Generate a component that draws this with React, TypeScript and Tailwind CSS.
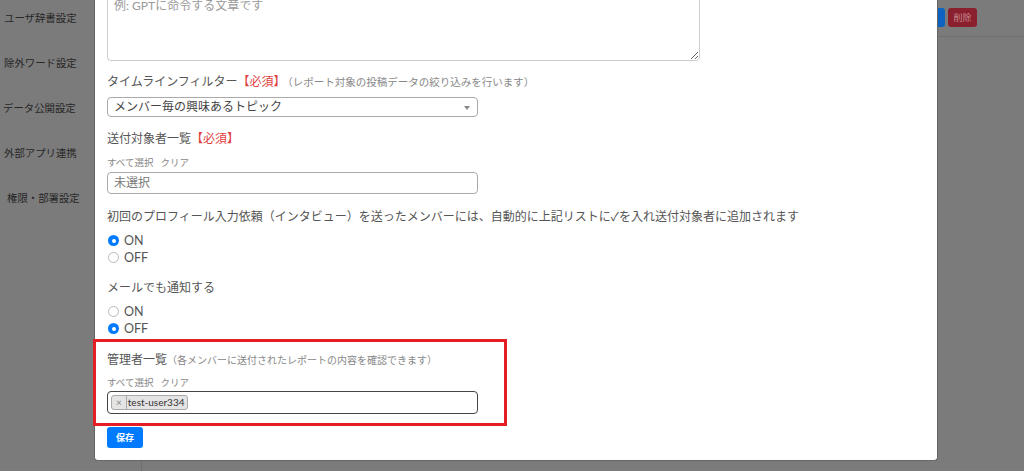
import React from 'react';

const sideItems = [
  { label: 'ユーザ辞書設定', pad: 'pl-[4px]' },
  { label: '除外ワード設定', pad: 'pl-[4px]' },
  { label: 'データ公開設定', pad: 'pl-[3px]' },
  { label: '外部アプリ連携', pad: 'pl-[4px]' },
  { label: '権限・部署設定', pad: 'pl-[7px]' },
];

function Radio({ label, checked }: { label: string; checked?: boolean }) {
  return (
    <label className="flex h-[17px] items-center">
      {checked ? (
        <span className="ml-[1px] flex h-[11px] w-[11px] items-center justify-center rounded-full bg-[#007bff]">
          <span className="h-[4px] w-[4px] rounded-full bg-white" />
        </span>
      ) : (
        <span className="ml-[1px] h-[11px] w-[11px] rounded-full border border-[#b8b8b8] bg-white" />
      )}
      <span className="ml-[5px] text-[12.5px] leading-[17px] text-[#555]">{label}</span>
    </label>
  );
}

function SelectLinks({ className }: { className: string }) {
  return (
    <div className={`flex h-[12px] gap-[7px] text-[9.5px] leading-[12px] text-[#888] ${className}`}>
      <span>すべて選択</span>
      <span>クリア</span>
    </div>
  );
}

export default function App() {
  return (
    <div className="relative h-[471px] w-[1024px] overflow-hidden bg-[#7b7b7b] font-[Lato,'Noto_Sans_CJK_JP',sans-serif]">
      {/* page behind the modal */}
      <div className="flex h-full">
        <aside className="w-[142px] shrink-0 border-r border-[#6d6d6d]">
          <nav className="flex flex-col gap-[31px] pt-[11px]">
            {sideItems.map((it) => (
              <div key={it.label} className={`h-[14px] text-[10.4px] leading-[14px] text-[#272727] ${it.pad}`}>
                {it.label}
              </div>
            ))}
          </nav>
        </aside>
        <main className="flex-1">
          <div className="flex h-[36px] justify-end gap-[3px] pr-[47px] pt-[8px]">
            <div className="h-[19px] w-[30px] rounded-[3px] bg-[#0d62c2]" />
            <div className="flex h-[19px] w-[29px] items-center justify-center rounded-[3px] bg-[#8a1f2d] text-[9px] text-[#c3868e]">
              削除
            </div>
          </div>
          <div className="border-t border-[#6f6f6f]" />
        </main>
      </div>

      {/* modal */}
      <div className="absolute left-[94px] top-[-10px] w-[844px] rounded-b-[4px] border border-t-0 border-[#666] bg-white pb-[12px] pl-[12px]">
        <textarea
          className="block h-[71px] w-[593px] resize-y rounded-[4px] border border-[#ccc] px-[6px] pt-[7px] text-[12px] leading-[16px] text-[#444] outline-none placeholder:text-[#9a9a9a]"
          placeholder="例: GPTに命令する文章です"
        />

        <p className="mt-[12px] h-[18px] text-[12px] leading-[18px] text-[#555]">
          タイムラインフィルター<span className="text-[#e0413f]">【必須】</span>
          <span className="ml-[2px] text-[10.5px] text-[#888]">（レポート対象の投稿データの絞り込みを行います）</span>
        </p>
        <div className="relative mt-[6px] flex h-[20px] w-[371px] items-center rounded-[4px] border border-[#aaa] pl-[6px] text-[12px] text-[#444]">
          メンバー毎の興味あるトピック
          <span className="absolute right-[7px] top-[8px] border-x-[3px] border-t-[4px] border-x-transparent border-t-[#888]" />
        </div>

        <p className="mt-[13px] h-[18px] text-[12px] leading-[18px] text-[#555]">
          送付対象者一覧<span className="text-[#e0413f]">【必須】</span>
        </p>
        <SelectLinks className="mt-[9px]" />
        <div className="mt-[3px] flex h-[22px] w-[371px] items-center rounded-[4px] border border-[#aaa] pl-[6px] text-[12px] text-[#777]">
          未選択
        </div>

        <p className="mt-[14px] h-[18px] text-[12px] leading-[18px] text-[#555]">
          初回のプロフィール入力依頼（インタビュー）を送ったメンバーには、自動的に上記リストに✓を入れ送付対象者に追加されます
        </p>
        <div className="mt-[6px]">
          <Radio label="ON" checked />
          <Radio label="OFF" />
        </div>

        <p className="mt-[13px] h-[18px] text-[12px] leading-[18px] text-[#555]">メールでも通知する</p>
        <div className="mt-[6px]">
          <Radio label="ON" />
          <Radio label="OFF" checked />
        </div>

        <p className="mt-[14px] h-[18px] text-[12px] leading-[18px] text-[#555]">
          管理者一覧
          <span className="text-[10px] text-[#888]">（各メンバーに送付されたレポートの内容を確認できます）</span>
        </p>
        <SelectLinks className="mt-[8px]" />
        <div className="mt-[2px] flex h-[23px] w-[371px] items-center rounded-[4px] border border-[#444] pl-[3px]">
          <span className="flex h-[15px] items-center rounded-[3px] border border-[#aaa] bg-[#e4e4e4] text-[10px] leading-[13px] text-[#333]">
            <span className="border-r border-[#aaa] px-[4px] text-[10px] text-[#888]">×</span>
            <span className="pl-[1px] pr-[2px]">test-user334</span>
          </span>
        </div>

        <button className="mt-[13px] block h-[21px] w-[36px] rounded-[3px] bg-[#007bff] text-[9px] font-bold text-white">
          保存
        </button>
      </div>

      {/* annotation frame */}
      <div className="absolute left-[93px] top-[339px] h-[87px] w-[414px] border-[3px] border-[#e31e24]" />
    </div>
  );
}
